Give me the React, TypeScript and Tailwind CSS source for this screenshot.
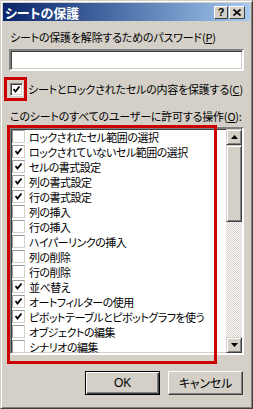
import React from "react";

const ITEMS: [string, boolean][] = [
  ["ロックされたセル範囲の選択", false],
  ["ロックされていないセル範囲の選択", true],
  ["セルの書式設定", true],
  ["列の書式設定", true],
  ["行の書式設定", true],
  ["列の挿入", false],
  ["行の挿入", false],
  ["ハイパーリンクの挿入", false],
  ["列の削除", false],
  ["行の削除", false],
  ["並べ替え", true],
  ["オートフィルターの使用", true],
  ["ピボットテーブルとピボットグラフを使う", true],
  ["オブジェクトの編集", false],
  ["シナリオの編集", false],
];

function Check({ checked, sunken }: { checked: boolean; sunken?: boolean }) {
  return (
    <div
      className={
        "w-[13px] h-[13px] shrink-0 bg-white flex items-center justify-center " +
        (sunken
          ? "border border-t-[#808080] border-l-[#808080] border-r-white border-b-white shadow-[inset_1px_1px_#404040,inset_-1px_-1px_#d4d0c8]"
          : "border border-t-[#9a9a9a] border-l-[#9a9a9a] border-r-[#d4d0c8] border-b-[#d4d0c8]")
      }
    >
      {checked && (
        <svg width="9" height="9" viewBox="0 0 9 9">
          <path d="M1.5 4 L3.5 6.5 L7.5 1.5" fill="none" stroke="#000" strokeWidth="1.8" />
        </svg>
      )}
    </div>
  );
}

function Arrow({ down }: { down?: boolean }) {
  return (
    <div className="w-[16px] h-[16px] shrink-0 bg-[#d4d0c8] border border-t-[#d4d0c8] border-l-[#d4d0c8] border-r-[#404040] border-b-[#404040] shadow-[inset_1px_1px_#fff,inset_-1px_-1px_#808080] flex items-center justify-center">
      <svg width="7" height="4" viewBox="0 0 7 4">
        <path d={down ? "M0 0 H7 L3.5 4 Z" : "M0 4 H7 L3.5 0 Z"} fill="#000" />
      </svg>
    </div>
  );
}

export default function App() {
  return (
    <div className="w-[253px] h-[409px] bg-[#d4d0c8] border border-t-[#d4d0c8] border-l-[#d4d0c8] border-r-[#404040] border-b-[#404040] shadow-[inset_1px_1px_#fff,inset_-1px_-1px_#808080] p-[2px] flex flex-col font-['Noto_Sans_CJK_JP',sans-serif] [font-feature-settings:'palt'] text-[11px] tracking-[-0.2px] text-black">
      {/* Title bar */}
      <div className="h-[18px] shrink-0 bg-gradient-to-r from-[#0a246a] to-[#a6caf0] flex items-center pl-[2px] pr-[5px]">
        <span className="text-white font-bold text-[13px] tracking-normal leading-none">シートの保護</span>
        <div className="ml-auto flex gap-[1px]">
          <div className="w-[14px] h-[13px] bg-[#d4d0c8] border border-t-white border-l-white border-r-[#404040] border-b-[#404040] flex items-center justify-center">
            <span className="font-['Liberation_Sans',sans-serif] font-bold text-[11px] leading-none">?</span>
          </div>
          <div className="w-[16px] h-[13px] bg-[#d4d0c8] border border-t-white border-l-white border-r-[#404040] border-b-[#404040] flex items-center justify-center">
            <svg width="8" height="7" viewBox="0 0 8 7">
              <path d="M0.5 0.5 L7.5 6.5 M7.5 0.5 L0.5 6.5" stroke="#000" strokeWidth="1.6" />
            </svg>
          </div>
        </div>
      </div>

      {/* Body */}
      <div className="flex flex-col px-[6px] pt-[9px]">
        <div className="pl-[1px] leading-[14px] whitespace-nowrap">
          シートの保護を解除するためのパスワード(<span className="underline">P</span>)
        </div>
        <div className="mt-[5px] h-[22px] bg-white border-2 border-t-[#808080] border-l-[#808080] border-r-white border-b-white shadow-[inset_1px_1px_#404040,inset_-1px_-1px_#d4d0c8]" />

        <div className="mt-[6px] -ml-[5px] flex items-center h-[24px] whitespace-nowrap">
          <div className="relative w-[23px] h-[24px] flex items-center justify-center pl-[2px]">
            <Check checked sunken />
            <div className="absolute inset-0 border-[3px] border-[#cc0000]" />
          </div>
          <span className="leading-[14px] ml-[1px]">
            シートとロックされたセルの内容を保護する(<span className="underline">C</span>)
          </span>
        </div>

        <div className="mt-[8px] pl-[1px] leading-[14px] whitespace-nowrap">
          このシートのすべてのユーザーに許可する操作(<span className="underline">O</span>):
        </div>

        <div className="relative mt-[4px] h-[228px] bg-white border-2 border-t-[#808080] border-l-[#808080] border-r-white border-b-white shadow-[inset_1px_1px_#404040,inset_-1px_-1px_#d4d0c8] flex">
          <div className="flex-1 overflow-hidden pl-[1px] tracking-[-0.5px]">
            {ITEMS.map(([label, on]) => (
              <div key={label} className="h-[15px] flex items-center gap-[4px] whitespace-nowrap leading-[14px]">
                <Check checked={on} />
                <span>{label}</span>
              </div>
            ))}
          </div>
          <div className="w-[16px] flex flex-col">
            <Arrow />
            <div className="h-[77px] bg-[#d4d0c8] border border-t-[#d4d0c8] border-l-[#d4d0c8] border-r-[#404040] border-b-[#404040] shadow-[inset_1px_1px_#fff,inset_-1px_-1px_#808080]" />
            <div className="flex-1 bg-[conic-gradient(#fff_25%,#d4d0c8_0_50%,#fff_0_75%,#d4d0c8_0)] bg-[length:2px_2px]" />
            <Arrow down />
          </div>
          <div className="absolute -left-[4px] -top-[4px] w-[210px] h-[239px] border-[3px] border-[#cc0000]" />
        </div>

        <div className="mt-[16px] flex justify-end gap-[8px] pr-[1px]">
          <button className="w-[75px] h-[24px] bg-[#d4d0c8] border border-black shadow-[inset_1px_1px_#fff,inset_-1px_-1px_#404040,inset_-2px_-2px_#808080] text-[12px] font-['Liberation_Sans',sans-serif]">
            OK
          </button>
          <button className="w-[75px] h-[24px] bg-[#d4d0c8] border border-t-white border-l-white border-r-[#404040] border-b-[#404040] shadow-[inset_-1px_-1px_#808080] text-[12px]">
            キャンセル
          </button>
        </div>
      </div>
    </div>
  );
}
